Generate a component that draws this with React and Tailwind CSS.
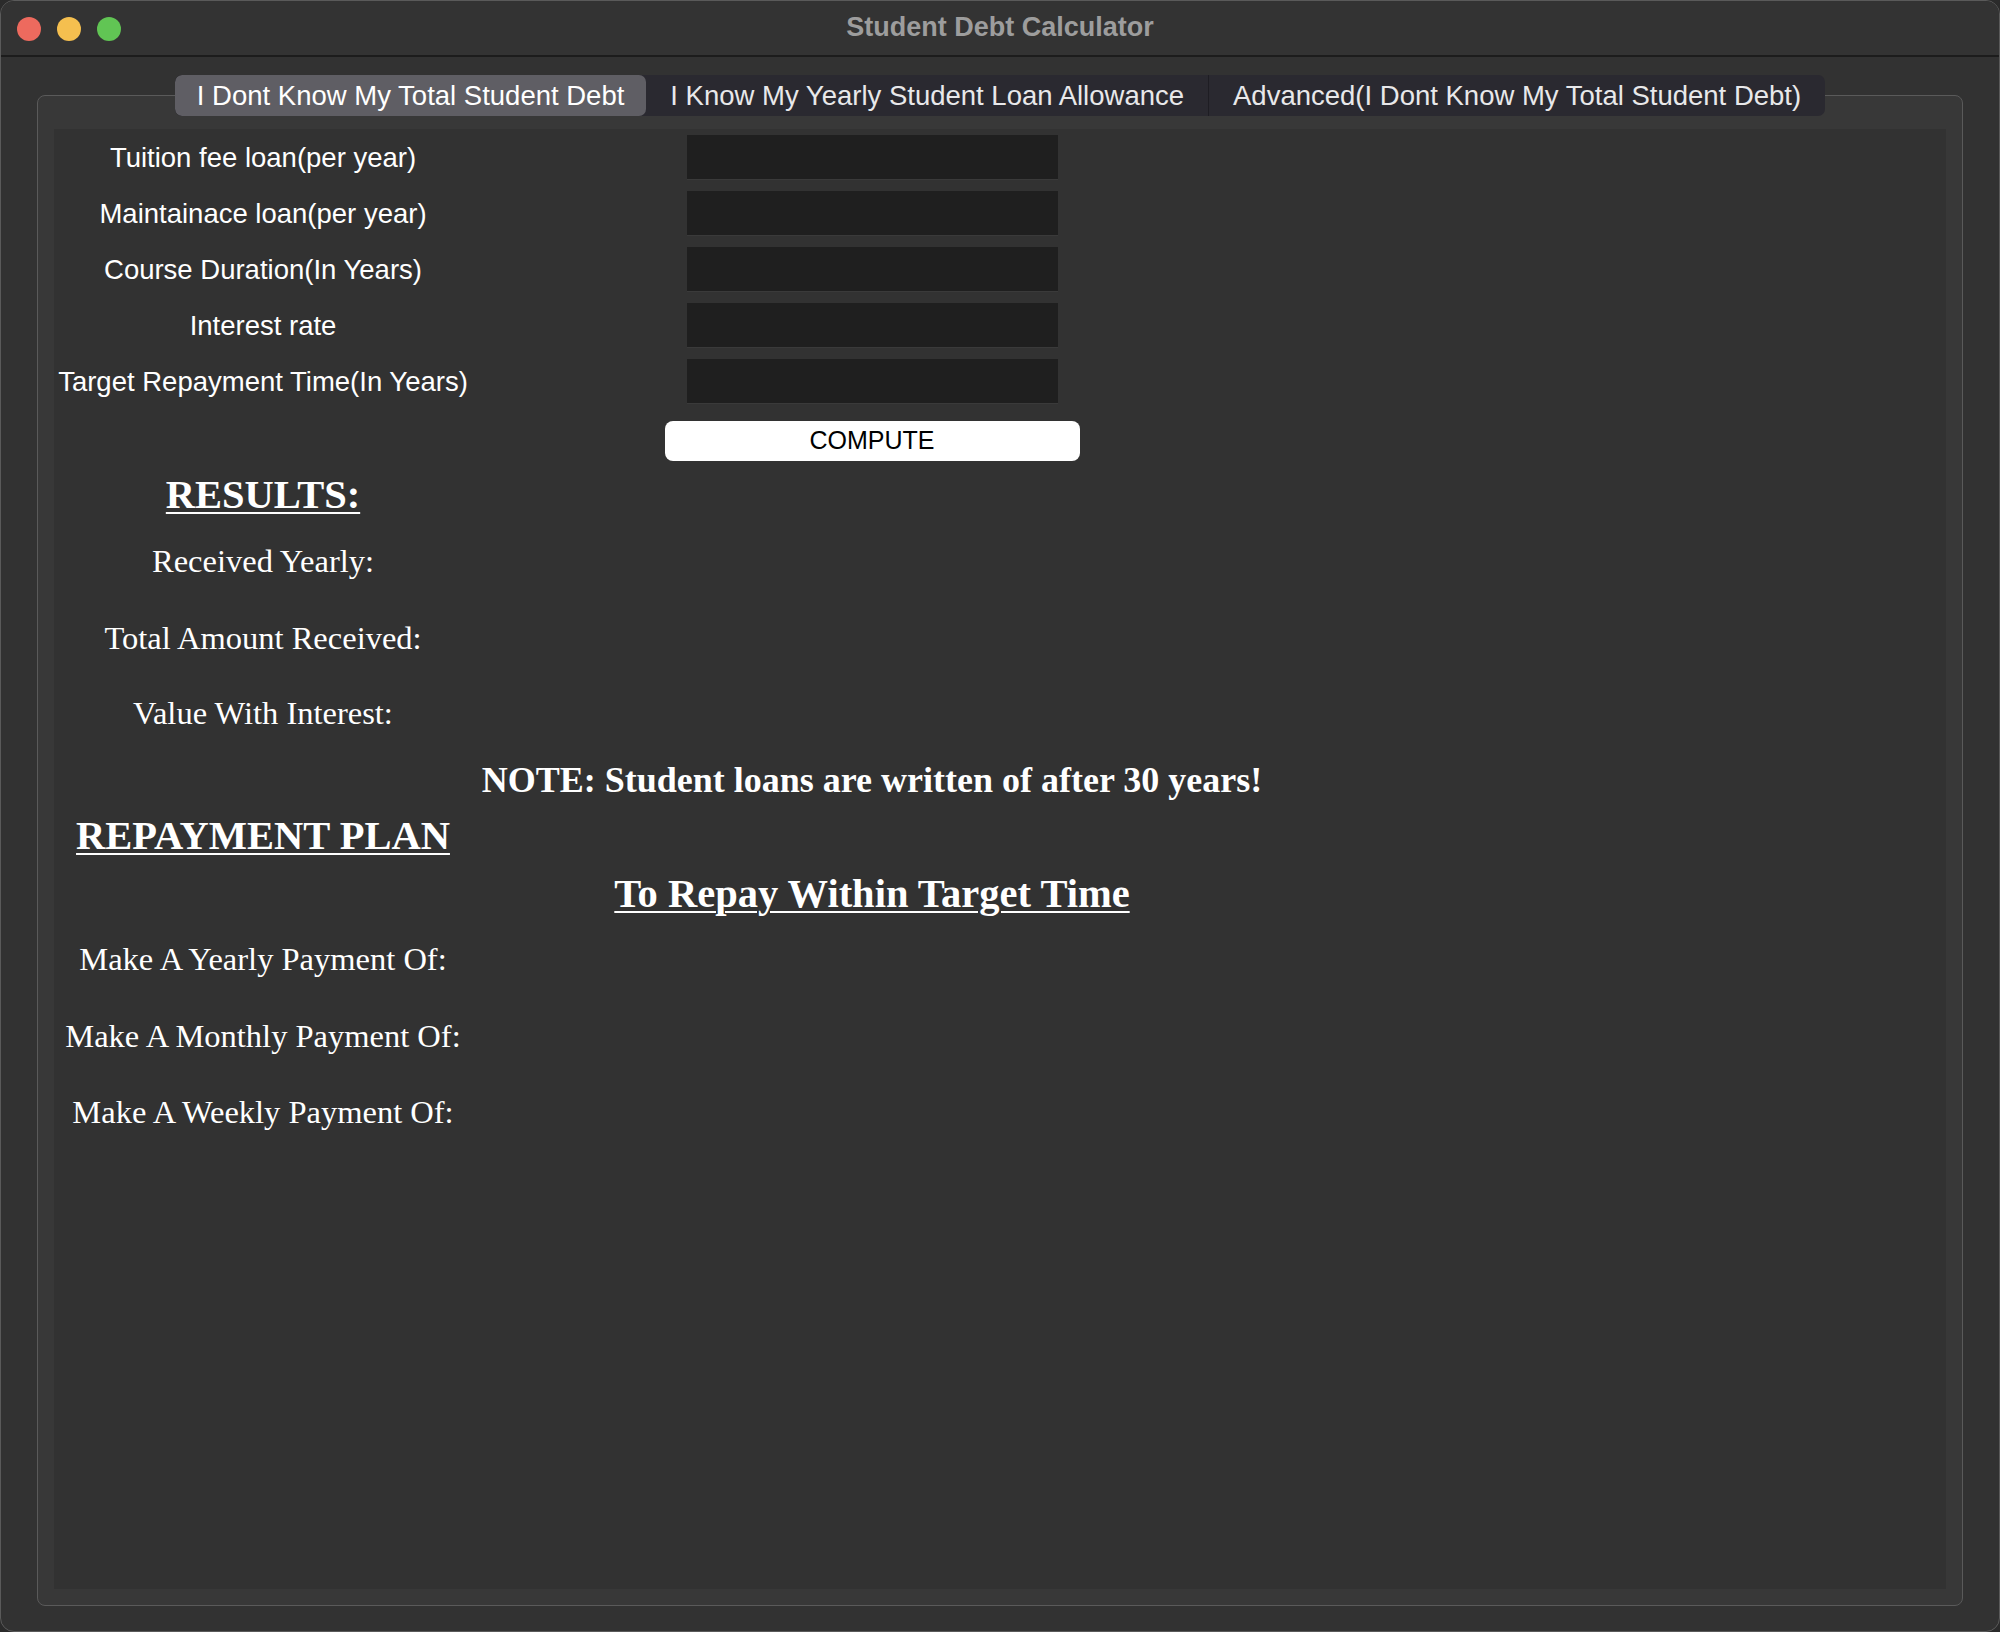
import React from 'react';

const sans = { fontFamily: '"Liberation Sans", Arial, sans-serif' };
const serif = { fontFamily: '"Liberation Serif", "Times New Roman", serif' };

const inputs = [
  'Tuition fee loan(per year)',
  'Maintainace loan(per year)',
  'Course Duration(In Years)',
  'Interest rate',
  'Target Repayment Time(In Years)',
];

function Row({ h, left, right }) {
  return (
    <div className={`flex ${h}`}>
      <div className="w-[418px] flex items-center justify-center">{left}</div>
      <div className="w-[800px] flex items-center justify-center">{right}</div>
    </div>
  );
}

export default function App() {
  return (
    <div className="w-[2000px] h-[1632px] bg-[#2b2b2b]">
      <div className="w-full h-full bg-[#323232] rounded-[14px] border border-[#5a5a5a] overflow-hidden flex flex-col">
        {/* title bar */}
        <div className="h-[56px] shrink-0 relative flex items-center justify-center border-b-2 border-[#1c1c1c] bg-[#333333]">
          <div className="absolute left-[16px] top-[16px] flex gap-[16px]">
            <span className="w-[24px] h-[24px] rounded-full bg-[#ed6a5e]" />
            <span className="w-[24px] h-[24px] rounded-full bg-[#f5bf4f]" />
            <span className="w-[24px] h-[24px] rounded-full bg-[#61c554]" />
          </div>
          <span className="text-[27px] font-bold text-[#9d9d9d] -mt-[2px]" style={sans}>Student Debt Calculator</span>
        </div>

        <div className="flex-1 flex flex-col px-[36px] pt-[18px]">
          {/* tabs */}
          <div className="relative z-10 flex justify-center">
            <div className="flex h-[41px] rounded-[7px] overflow-hidden bg-[#2a2930] text-[27.5px]" style={sans}>
              <div className="px-[22px] flex items-center bg-[#5f5e64] text-white rounded-[7px]">I Dont Know My Total Student Debt</div>
              <div className="px-[24px] flex items-center text-[#e8e8ea]">I Know My Yearly Student Loan Allowance</div>
              <div className="w-px bg-[#1e1d23]" />
              <div className="px-[24px] flex items-center text-[#e8e8ea]">Advanced(I Dont Know My Total Student Debt)</div>
            </div>
          </div>

          {/* tab box */}
          <div className="-mt-[21px] h-[1511px] border border-[#5a5a5a] rounded-[8px] bg-[#383838] pt-[33px] px-[16px] pb-[16px]">
            <div className="h-full bg-[#323232] flex flex-col">
              {inputs.map((label) => (
                <Row
                  key={label}
                  h="h-[56px]"
                  left={<span className="text-[27.5px] text-white mt-[2px]" style={sans}>{label}</span>}
                  right={<div className="w-[371px] h-[44px] bg-[#1f1f1f] shadow-[0_1px_0_#3a3a3a]" />}
                />
              ))}
              <Row
                h="h-[63px]"
                right={
                  <button className="w-[415px] h-[40px] mt-[1px] bg-white rounded-[8px] text-[25px] text-black" style={sans}>
                    COMPUTE
                  </button>
                }
              />
              <Row h="h-[46px]" left={<span className="text-[40.5px] font-bold underline decoration-2 underline-offset-4 text-white" style={serif}>RESULTS:</span>} />
              <Row h="h-[86px]" left={<span className="text-[32.5px] text-white" style={serif}>Received Yearly:</span>} />
              <Row h="h-[68px]" left={<span className="text-[32.5px] text-white" style={serif}>Total Amount Received:</span>} />
              <Row h="h-[83px]" left={<span className="text-[32.5px] text-white" style={serif}>Value With Interest:</span>} />
              <Row h="h-[50px]" right={<span className="text-[36px] font-bold text-white whitespace-nowrap" style={serif}>NOTE: Student loans are written of after 30 years!</span>} />
              <Row h="h-[62px]" left={<span className="text-[40.5px] font-bold underline decoration-2 underline-offset-4 text-white" style={serif}>REPAYMENT PLAN</span>} />
              <Row h="h-[55px]" right={<span className="text-[40.5px] font-bold underline decoration-2 underline-offset-4 text-white" style={serif}>To Repay Within Target Time</span>} />
              <Row h="h-[75px]" left={<span className="text-[32.5px] text-white" style={serif}>Make A Yearly Payment Of:</span>} />
              <Row h="h-[78px]" left={<span className="text-[32.5px] text-white" style={serif}>Make A Monthly Payment Of:</span>} />
              <Row h="h-[74px]" left={<span className="text-[32.5px] text-white" style={serif}>Make A Weekly Payment Of:</span>} />
            </div>
          </div>
        </div>
      </div>
    </div>
  );
}
